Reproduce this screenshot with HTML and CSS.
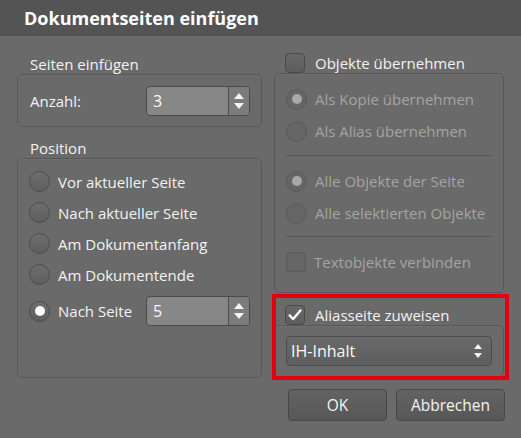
FILE: index.html
```html
<!DOCTYPE html>
<html lang="de">
<head>
  <meta charset="UTF-8" />
  <title>Dokumentseiten einfügen</title>
  <link rel="stylesheet" href="styles.css">
</head>
<body>
  <div class="dialog">
    <div class="titlebar">Dokumentseiten einfügen</div>

    <div class="content">
      <div class="col left">
        <div class="group-label">Seiten einfügen</div>
        <div class="group count">
          <span class="text">Anzahl:</span>
          <div class="spin">
            <span class="val">3</span>
            <span class="arrows">
              <svg width="12" height="20" viewBox="0 0 12 20"><path d="M1 8 L6 2 L11 8 Z" fill="#f4f4f4"/><path d="M1 12 L11 12 L6 18 Z" fill="#f4f4f4"/></svg>
            </span>
          </div>
        </div>

        <div class="group-label">Position</div>
        <div class="group position">
          <div class="row"><span class="radio"></span><span class="text">Vor aktueller Seite</span></div>
          <div class="row"><span class="radio"></span><span class="text">Nach aktueller Seite</span></div>
          <div class="row"><span class="radio"></span><span class="text">Am Dokumentanfang</span></div>
          <div class="row"><span class="radio"></span><span class="text">Am Dokumentende</span></div>
          <div class="row after-page">
            <span class="radio on"></span><span class="text">Nach Seite</span>
            <div class="spin">
              <span class="val">5</span>
              <span class="arrows">
                <svg width="12" height="20" viewBox="0 0 12 20"><path d="M1 8 L6 2 L11 8 Z" fill="#f4f4f4"/><path d="M1 12 L11 12 L6 18 Z" fill="#f4f4f4"/></svg>
              </span>
            </div>
          </div>
        </div>
      </div>

      <div class="col right">
        <div class="check-label"><span class="check"></span><span class="text">Objekte übernehmen</span></div>
        <div class="group objects disabled">
          <div class="row"><span class="radio on"></span><span class="text">Als Kopie übernehmen</span></div>
          <div class="row"><span class="radio"></span><span class="text">Als Alias übernehmen</span></div>
          <div class="sep"></div>
          <div class="row"><span class="radio on"></span><span class="text">Alle Objekte der Seite</span></div>
          <div class="row"><span class="radio"></span><span class="text">Alle selektierten Objekte</span></div>
          <div class="sep second"></div>
          <div class="row"><span class="check"></span><span class="text">Textobjekte verbinden</span></div>
        </div>

        <div class="alias">
          <div class="check-label"><span class="check on">
            <svg width="20" height="20" viewBox="0 0 20 20"><path d="M4 10.5 L8 14.5 L16 5" fill="none" stroke="#fff" stroke-width="2.6" stroke-linecap="round" stroke-linejoin="round"/></svg>
          </span><span class="text">Aliasseite zuweisen</span></div>
          <div class="group alias-box">
            <div class="select">
              <span>IH-Inhalt</span>
              <svg width="10" height="18" viewBox="0 0 10 18"><path d="M1 7 L5 2 L9 7 Z" fill="#f4f4f4"/><path d="M1 11 L9 11 L5 16 Z" fill="#f4f4f4"/></svg>
            </div>
          </div>
          <div class="highlight"></div>
        </div>

        <div class="buttons">
          <button class="btn ok">OK</button>
          <button class="btn cancel">Abbrechen</button>
        </div>
      </div>
    </div>
  </div>
</body>
</html>
```

FILE: styles.css
```css
* {
  box-sizing: border-box;
  margin: 0;
  padding: 0;
}
body {
  width: 521px;
  height: 438px;
  background: #6a6a6a;
  font-family: 'Open Sans', 'DejaVu Sans', sans-serif;
  font-size: 15px;
  color: #f3f3f3;
  overflow: hidden;
}
.dialog {
  height: 100%;
}
.titlebar {
  height: 36px;
  line-height: 36px;
  padding-left: 24px;
  background: #545454;
  color: #fff;
  font-size: 18px;
  font-weight: bold;
}
.content {
  display: flex;
  gap: 12px;
  padding: 0 17px;
}
.col.left {
  width: 245px;
  padding-top: 18px;
}
.col.right {
  width: 230px;
  padding-top: 17px;
  position: relative;
}

/* group boxes */
.group-label {
  height: 20px;
  line-height: 20px;
  padding-left: 13px;
}
.group {
  border: 1px solid #585858;
  border-radius: 5px;
  box-shadow: inset 0 1px 0 rgba(255,255,255,0.04);
}
.group.count {
  height: 53px;
  display: flex;
  align-items: center;
  justify-content: space-between;
  padding: 0 11px 0 12px;
}
.group.count + .group-label {
  margin-top: 11px;
}
.group.position {
  height: 220px;
  padding: 7px 11px 0;
}
.row {
  display: flex;
  align-items: center;
  height: 31px;
}
.row .text {
  margin-left: 8px;
}
.row.after-page {
  height: 30px;
  margin-top: 6px;
}
.row.after-page .spin {
  margin-left: auto;
}

/* spin box */
.spin {
  width: 104px;
  height: 30px;
  display: flex;
  border: 1px solid #4a4a4a;
  border-radius: 4px;
  background: #878787;
  overflow: hidden;
}
.spin .val {
  flex: 1;
  line-height: 28px;
  padding-left: 6px;
  font-size: 16px;
  color: #fafafa;
}
.spin .arrows {
  width: 21px;
  border-left: 1px solid #4f4f4f;
  background: #7c7c7c;
  display: flex;
  align-items: center;
  justify-content: center;
}

/* radio buttons and check boxes */
.radio {
  width: 21px;
  height: 21px;
  flex: none;
  border-radius: 50%;
  border: 1px solid #4c4c4c;
  background: linear-gradient(#6e6e6e, #5e5e5e);
  display: flex;
  align-items: center;
  justify-content: center;
}
.radio.on::after {
  content: "";
  width: 10px;
  height: 10px;
  border-radius: 50%;
  background: #fff;
}
.check {
  width: 20px;
  height: 20px;
  flex: none;
  border: 1px solid #4a4a4a;
  border-radius: 4px;
  background: linear-gradient(#686868, #5c5c5c);
  display: flex;
  align-items: center;
  justify-content: center;
}
.check svg {
  display: block;
}
.check-label {
  display: flex;
  align-items: center;
  height: 20px;
  padding-left: 11px;
}
.check-label .text {
  margin-left: 10px;
}

/* disabled object options */
.group.objects {
  height: 220px;
  padding: 9px 11px 0;
}
.group.objects .row {
  height: 32px;
}
.disabled .text {
  color: #a4a4a4;
}
.disabled .radio {
  border-color: #5a5a5a;
  background: #656565;
}
.disabled .radio.on::after {
  background: #a8a8a8;
}
.disabled .check {
  border-color: #5a5a5a;
  background: #656565;
}
.sep {
  height: 1px;
  background: #555;
  margin: 8px 0 9px;
}
.sep.second {
  margin: 7px 0 9px;
}

/* alias page */
.alias {
  position: relative;
  margin-top: 11px;
}
.alias .check-label {
  height: 21px;
}
.group.alias-box {
  height: 52px;
  padding: 10px 11px 0 11px;
}
.select {
  height: 30px;
  display: flex;
  align-items: center;
  justify-content: space-between;
  padding: 0 8px 0 4px;
  border: 1px solid #4c4c4c;
  border-radius: 4px;
  background: linear-gradient(#696969, #5e5e5e);
  font-size: 16px;
  color: #fafafa;
}
.highlight {
  position: absolute;
  left: -2px;
  right: -5px;
  top: -10px;
  bottom: -3px;
  border: 4px solid #e4000f;
  pointer-events: none;
}

/* buttons */
.buttons {
  display: flex;
  justify-content: flex-end;
  gap: 9px;
  margin: 12px -1px 0 0;
}
.btn {
  height: 32px;
  border: 1px solid #474747;
  border-radius: 4px;
  background: linear-gradient(#636363, #575757);
  color: #f3f3f3;
  font-family: inherit;
  font-size: 15.5px;
}
.btn.ok {
  width: 99px;
}
.btn.cancel {
  width: 109px;
}
```
